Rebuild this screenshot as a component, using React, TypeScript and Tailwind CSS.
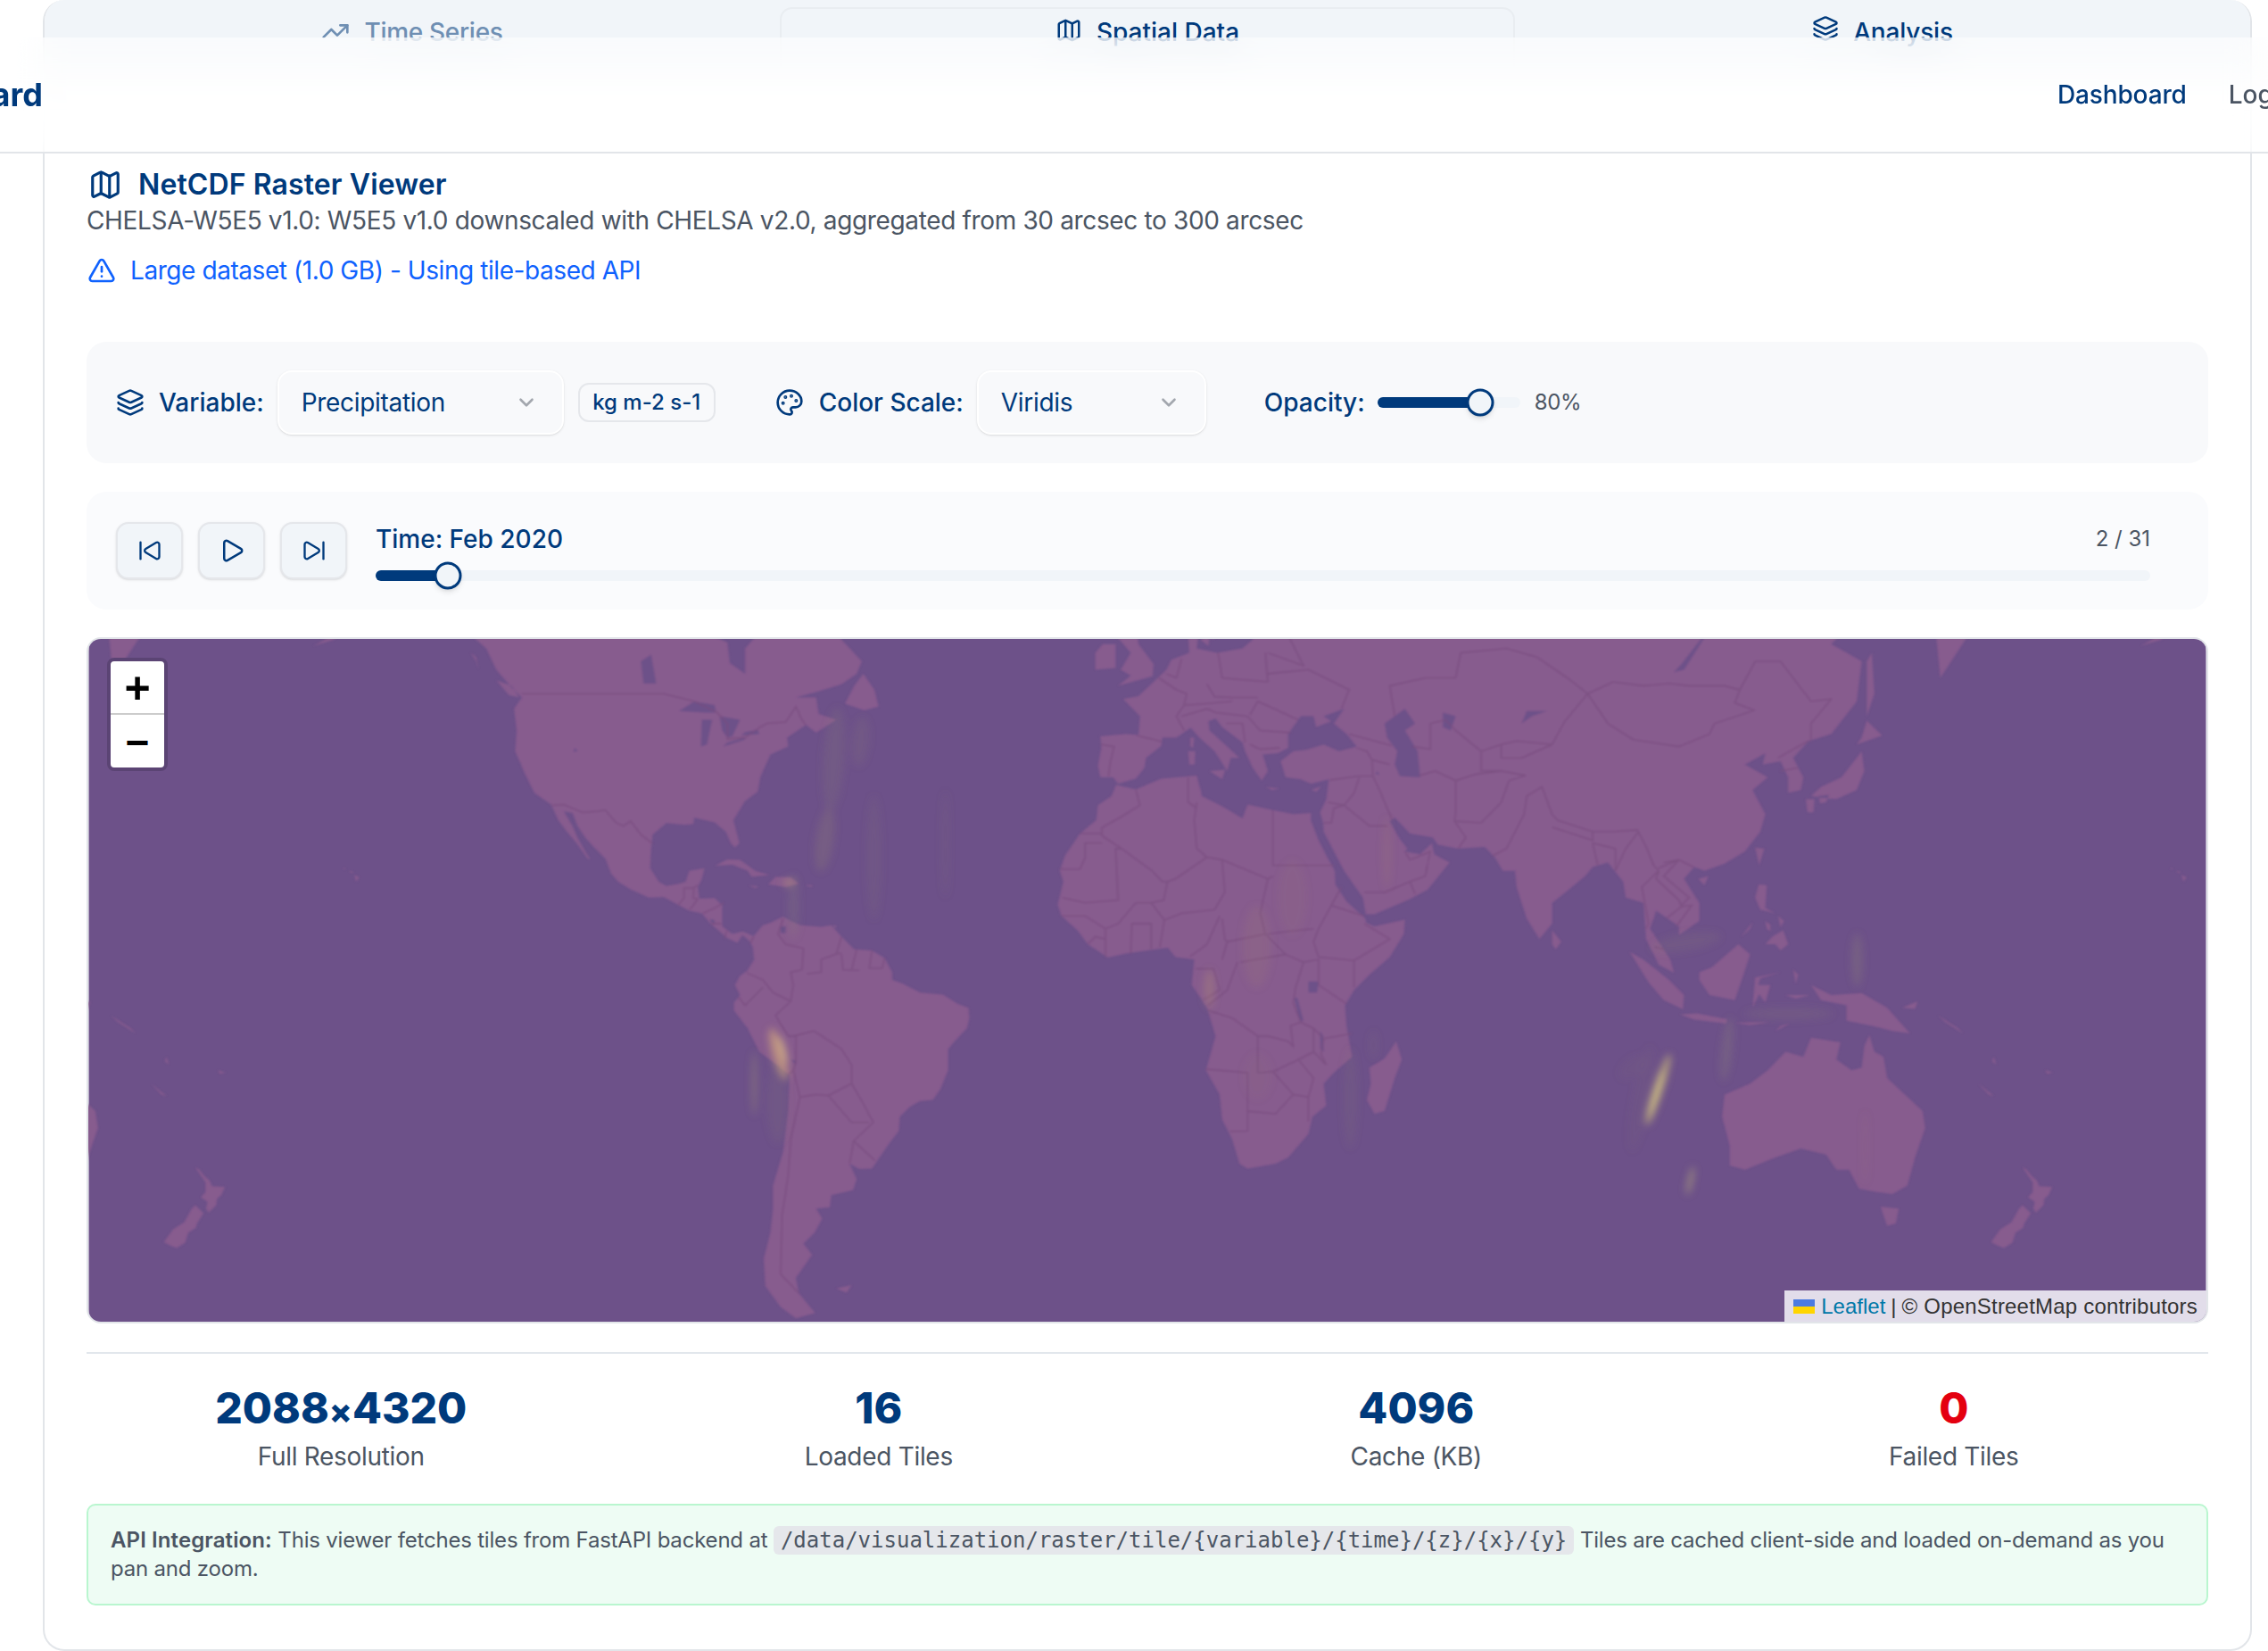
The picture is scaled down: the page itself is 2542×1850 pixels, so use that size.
import React from "react";
import {
  ChevronDown,
  Layers,
  Map as MapIcon,
  Palette,
  Play,
  SkipBack,
  SkipForward,
  TrendingUp,
  TriangleAlert,
} from "lucide-react";

// MAP DATA (lon,lat), web mercator at leaflet zoom 2 on a 2x screen
const LAND = [
  // north america
  "-168,66 -162,60 -158,58 -157,57 -164,54.8 -160,55.5 -156,57.5 -153,59 -151,61 -149,60 -146,60.8 -140,60 -136,58.3 -133,56 -130,54.5 -128,52 -125,49.8 -123,48.5 -124.5,47 -124,44 -124.3,41 -122.5,37.8 -120.5,34.5 -117.2,32.6 -115.8,30 -114.1,28 -112.2,26 -110,23.2 -109.5,23.1 -110.5,24.5 -112,27 -113,29 -114.7,31.5 -113,31.2 -112,29 -110.5,27 -109,25.5 -106.5,23.2 -105.4,20.5 -104,19 -101.5,17.5 -98,16 -95,16.1 -92,14.5 -90,13.5 -87.5,13 -85.8,11 -84,9.5 -82.5,8.2 -80.5,7.3 -79.5,8.8 -77.9,7.4 -77.3,8.6 -79.5,9.5 -81.5,9 -83.5,10.5 -83.5,14.5 -85,15.9 -88,15.8 -88.3,18 -87.5,19.5 -87,21.5 -90,21 -90.7,19 -92,18.6 -94.5,18.2 -96,19 -97.7,21.5 -97.5,25 -97.2,27.5 -94.5,29.5 -91,29.2 -89.2,29.3 -89,30.4 -85,29.6 -82.8,28 -81.8,26 -81,25.2 -80.1,26 -81.3,30 -79,33.2 -76.5,34.7 -76,37 -74,40.5 -70.5,41.7 -70.7,43 -67,44.8 -65,43.7 -61,45.5 -64.5,46.3 -65,48.5 -69,48.5 -65,49.2 -60,50.2 -57,51.5 -56,53 -60,55.5 -62,58 -64.5,60.3 -69,58.8 -72,61 -78,62.5 -77,60 -78.5,58 -76.7,56 -79,54.5 -79,51.5 -82,52.8 -82.5,55.2 -88,56.5 -92.5,57 -94.5,59 -94,61 -95,66 -100,70 -130,72",
  "-59.3,47.7 -55.5,46.8 -52.7,47.3 -53.5,49.5 -55.7,51.5 -57.5,50",
  "-84.9,21.9 -82.5,23.1 -80,23 -77,21 -74.2,20.2 -77.7,19.9 -78.5,21 -81.5,22.1",
  "-74.4,18.5 -73,19.9 -70,19.8 -68.4,18.6 -71,18",
  "-78.3,18.3 -76.3,18.1 -77,17.8",
  "-67.2,18.4 -65.7,18.3 -66,18",
  "-128,50.7 -125,50 -123.5,48.5 -125.5,48.8",
  "-133,54 -132,53 -131.5,52 -132,53.5",
  "-156,20.2 -155,19.8 -155.6,19",
  "-158.2,21.6 -157.7,21.4 -158,21.2",
  "-157,21 -156,20.7 -156.6,20.6",
  // south america
  "-77.3,8.6 -75.5,10.7 -74,11.2 -71.5,12.4 -70,11.5 -68,10.7 -64,10.4 -62,10.7 -60,8.5 -57.5,6 -54,5.8 -51.5,4.3 -50,1.5 -50,0 -48,-0.7 -44.5,-2.5 -40,-2.9 -37,-4.8 -35,-5.5 -34.8,-7.5 -35.3,-9.5 -37.5,-11.8 -39,-13.5 -39,-17.5 -40.5,-21 -42,-23 -44.5,-23.2 -46.5,-24.2 -48.5,-26 -48.7,-28.5 -50.5,-30.5 -52.5,-33 -54,-34.8 -56.5,-34.9 -58.4,-34 -57,-36.5 -57.7,-38.2 -62,-39 -62.3,-40.8 -65,-41 -63.8,-42.5 -65.3,-44.5 -67.5,-46 -65.8,-47.5 -69,-50.5 -68.4,-52.4 -65.2,-54.7 -69,-55.3 -72,-54 -75,-51.5 -75.3,-48 -74,-44.5 -73.5,-41 -73.5,-37.5 -71.5,-32 -70.5,-25 -70.2,-18.5 -72,-17 -76.2,-14 -78.5,-9.5 -81.2,-6 -81.2,-4.5 -80,-3 -81,-1 -80,0.8 -78.6,1.8 -77.2,4 -77.5,6.5 -77.9,7.2",
  "-61,-51.8 -58,-51.4 -59,-52.3",
  "-61.7,10.7 -61,10.6 -61.2,10.1",
  // africa
  "-5.9,35.8 -2,35.1 3,36.8 10,37.3 11,34 15,32.3 19,30.3 20,32.6 25,31.7 29,31 32.5,31.2 32.5,29.9 34,26.5 35.7,23.5 37.2,21 37.3,18.5 39.5,15.3 43.2,12 43.4,11.2 45,10.5 51,11.8 50.8,9 48,4.5 44,1 41,-2 39.2,-5 39.5,-9 40.6,-15 37,-18 35,-20 35.5,-24 32.8,-26 32,-29 28,-33 25.5,-34 20,-34.8 18.4,-34 17,-30 15,-26.5 14.5,-22 11.8,-17.5 13.7,-11 12,-5.5 9,-1 9.5,4 5.8,4.5 4.3,6.3 1,5.9 -4,5.2 -7.5,4.4 -11.5,7 -13.5,9.7 -16.7,12.5 -17.4,14.7 -16.3,19 -17,21 -16,23.7 -13,27.7 -9.8,30 -9.5,32.5 -6.8,34",
  "49.3,-12 50.4,-15.5 49,-19 47,-25 45,-25.5 43.5,-23 44.3,-20 44,-17 47,-15.3",
  // eurasia
  "-9.5,38.8 -8.8,41.5 -9,43.2 -4,43.5 -1.5,43.4 -1.2,46 -4.5,48.3 -1.5,48.7 1.5,50.5 4,52 5,53.2 8.5,54 8.2,57 10.6,57.7 10,54.5 14,54 19,54.5 21,55.5 21,57 24,58 23.5,59.3 30,60 23,60 21,62 25,65.5 22,65.5 17.5,62 19,60 16.5,57 14.5,56 13,55.5 11,59 6,58 5,62 15,69 30,71 40,67 60,70 100,76 140,73 180,69 180,65 177,62.5 170,60 163,59.5 162,56 156.5,51 155.5,57 160,61 155,59 143,59.5 135,55 141,53 140,48 135,43.5 130.5,42.5 127.5,40 129.5,37 129,35 126.5,34.5 126.5,37 125,39.5 121.5,39 122,40.7 118,39 122.5,37 119.5,35 122,31 121,28 118,24.5 114,22.3 110,21 108,21.7 106,19.5 109,15 109,11.5 105,8.8 105,10.5 100.5,13.5 99.3,10 103.3,4 104,1.4 101,3 98.5,8 98,15 94.5,16 94,19 91,22.5 88,21.7 86.5,20 82,16.5 80,15 80,11 77.5,8 75,12 73,18 72.7,21 70.3,21 68.7,23.5 66.7,25.3 61.5,25 57.5,25.7 56.5,27 52,27.7 49,30.4 48,29.8 50,26.7 51.5,25 51,24.5 54,24 56.3,26 56.8,24 59.8,22.5 55.5,17.5 52,15.7 45,12.8 43.3,12.8 42.7,16 39,21 35,28 34.9,29.5 34.3,31.3 35.5,33.5 36,36.7 32.5,36 30.5,36.7 27.5,37 26.5,39.5 29,41 31.5,41.2 35,42 38,41 41.5,41.7 39.5,43.5 37,45 39,47 35,46 36.5,45.3 33.5,44.5 33,46 30.5,46 28,43.5 28,41.5 26,40.7 23,40.5 24,38 22.8,36.5 21,38.5 19.5,41 19,42.3 15,44.5 13.7,45.7 12.3,45.3 12.5,44 16,41.7 18.4,40 16.7,40 16,38 13.5,41 10.5,43 8.8,44.4 6,43 3.2,43 3,41.8 0,40 -0.3,38.5 -2,36.8 -5.5,36 -6.5,37 -9,37",
  "-5.5,50 1.3,51.2 1.5,52.7 -1.5,55 -2,57.6 -5,58.5 -6,56 -3,54 -5,52 -3,51.3",
  "-10,52 -6,52.2 -6,55 -8.5,55 -10,54",
  "12.5,38 15.6,38.2 15,36.7",
  "8.3,41 9.7,41 9.6,39 8.5,39",
  "8.7,43 9.5,43 9.3,41.5 8.7,41.7",
  "23.6,35.5 26.3,35.2 24.8,35",
  "32.5,35 34.5,35.6 33.6,34.7",
  "10.7,55.5 12.5,56 12.3,54.8",
  "18.2,57.9 19,57.9 18.5,57",
  "80,9.7 81.8,7.5 80.7,6 80,7",
  "131,34 136,33.5 140,35 141.5,38 141,41 140,40 137,37 133,35.5",
  "130,33.5 131.7,33.5 131.5,31.3 130.3,31.3",
  "132.5,34 134.5,34.2 134,33 132.8,32.8",
  "140,42 145,43.3 142,45.4 141,43",
  "142,46 143.5,49 143,54 142,53",
  "120,25.2 121.8,25 120.8,22",
  "108.8,19.5 110.8,20 110,18.3",
  "120,16 120.7,18.5 122.3,18.3 122,14 124,13 121,13.7",
  "122,7 123.5,8.6 125.5,9.7 126.5,7 125,5.8 124,7",
  "122,11.5 123,10.8 123,9.5 122.3,10",
  "124.5,12.5 125.7,11.5 125,10.3",
  "117.2,8.4 119.5,11.3 119,10",
  // indonesia etc
  "95.3,5.5 98,4 103,0 106,-3 105.8,-5.8 102,-4 99,-0.5",
  "105.2,-6.8 108.5,-6.6 114.5,-7.7 114.3,-8.6 108,-7.8",
  "109,1.5 111.5,2.5 116.7,7 119,5 117.7,1 116,-4 111,-3 109,0",
  "119.5,-5.5 120,0.5 125,1.5 121,0.3 120.6,-1 123,-1 122,-4.5 120.8,-2.8",
  "131,-1 135,-3 141,-2.6 146,-5.5 150.5,-10.5 147,-10 143,-9 138,-8 138,-5 133,-4",
  "116,-8.4 119,-8.3 123,-8.3 119,-8.9",
  "124,-10 127,-8.5 125,-9",
  "127.5,2 128.5,1 128,-0.8",
  "126,-3 130.8,-3 128,-3.7",
  "149,-5.5 152,-4.2 151.5,-5.7",
  "156,-7 160,-9.5 161,-10.5 157.5,-8.3",
  "164,-20 167,-22.3 166,-22",
  "177.2,-17.5 178.6,-18 177.5,-18.2",
  "167,-15 167.5,-16.5 166.7,-15.8",
  // australia, nz
  "114,-22 113.5,-26 115,-31 115,-34.3 118,-35 124,-33 129,-31.5 134,-32.5 136,-35 138.5,-35 140.5,-38 144,-38.5 147,-38.8 150,-37.5 151.5,-33 153.5,-28 153,-25 149.5,-22 146,-19 145.3,-15 143.5,-14 142.5,-10.8 141.5,-13 141,-17 139,-17.5 136,-15.5 136.8,-12.2 131,-11.3 129.5,-15 126,-14 122.5,-17.5 119,-20",
  "144.7,-40.7 148.3,-41 147.7,-43.2 146,-43.5",
  "172.7,-34.5 173.5,-35 174.5,-36 175.5,-36.7 176,-37.6 178.5,-37.7 177.8,-39 177,-39.5 176.8,-40.5 175.3,-41.6 174.8,-41 175.1,-40 173.8,-39.3 174.7,-38.5 174.7,-37 173,-35",
  "172.7,-40.5 174.3,-41.7 173,-43.2 172.8,-43.8 171.3,-44.5 170.7,-45.9 169,-46.6 167.5,-46.2 166.5,-45.8 168.3,-44 170.5,-43 172,-41",
];

const WATER = [
  "47,45 51,47 53,45 51,44 53.5,41 54,37 50,37.2 49,39 49.5,41 47.5,43",
  "58.5,46.5 61,46 60,44 58.5,44.5",
  "74,45 75,46.7 79,46.7 76,46",
  "104,51.7 106,52 110,55.7 109.5,55.7 105.5,52.7",
  "32,-0.3 34,-0.3 33.7,-2.5 32,-2.5",
  "29.2,-3.5 29.8,-3.5 31,-8 30.3,-8",
  "34.3,-10 34.9,-11 35,-14 34.4,-13.5",
  "-92,46.7 -89,48 -85,47.5 -84.7,46.5 -87,46.5",
  "-87.7,41.7 -86.5,42 -85.5,45.5 -87.5,45.5",
  "-84,46 -80,45.5 -81.5,43.2 -82.5,43 -83.5,44",
  "-83.3,41.7 -79,42.7 -79,43 -82.5,42.3",
  "-79.7,43.3 -76.2,43.5 -76.5,44.1 -79,43.8",
  "-99,50.3 -96.5,50.3 -97.5,53.8 -99.5,53",
  "-112.5,41.5 -112,41 -112.8,40.9",
  "-70,-15.5 -69,-15.7 -69,-16.5",
  "-72,10.5 -71,10.5 -71,9.2 -72,9.2",
  "45.5,38 46,37.4 45.3,37.5",
  "-85.9,11.9 -85,11.7 -85,11 -85.7,11.3",
];

const BORDERS = [
  "-123,49 -95,49 -89,48 -84.5,46.5 -82.5,45 -82.5,42.8 -79,43 -76,44.5 -74.7,45 -71,45.2 -69,47.3 -67.8,45.5 -67,44.8",
  "-141,60 -141,70",
  "-117,32.5 -114.7,32.6 -111,31.3 -108,31.5 -106.5,31.7 -104.5,29.6 -103,29 -101.5,29.8 -99.5,27.5 -97.2,25.9",
  "-92.2,14.5 -91,16 -91,17.8 -89.1,17.8 -88.3,18.4",
  "-89.1,17.8 -89.2,15.9 -88.3,15.7",
  "-89.9,13.7 -89.3,14.4 -88.3,15.7",
  "-87.3,13 -85,14 -83.2,15",
  "-85.7,11 -83.7,11",
  "-83,8.2 -82.6,9.6",
  "-77.9,7.2 -77.3,8.6",
  "-71.5,12 -72.5,9 -71,7 -67.5,6.2 -67.8,2 -70,1.5 -69.5,-1 -70,-4.2",
  "-60,8.5 -61,5.2 -60,5.2",
  "-60.7,5.2 -64,4 -64,1.5 -66.8,1.2",
  "-60,5 -59.7,2 -56.5,1.9",
  "-57,6 -58,2",
  "-54,5.8 -54.5,2.3 -52,2.3 -51.5,4.3",
  "-78.7,1.4 -75.5,0 -73.5,-2.5 -70,-4.2",
  "-80.3,-3.4 -79,-5 -75.5,-1.5",
  "-70,-4.2 -73,-7 -70.5,-11 -69,-11 -69,-16 -69.5,-17.5",
  "-69.5,-11 -65.4,-10 -60,-13.5 -58,-16.5 -58,-20 -62.6,-22.2",
  "-69.5,-17.5 -68.2,-22.5 -65,-22 -62.6,-22.2",
  "-68.2,-22.5 -70,-30 -70.5,-36 -71.7,-42 -72,-50 -68.4,-52.4",
  "-69.5,-17.5 -70.4,-18.3",
  "-62.6,-22.2 -58,-27 -54.6,-27",
  "-58,-20 -55.5,-24 -54.6,-25.6 -53.7,-27 -57.6,-30.2 -53.4,-33.5",
  "-57.6,-30.2 -58.4,-34",
  "-2,35 -1.2,32.5 -5,30.5 -8.7,28.7 -8.7,27.3",
  "-13,27.7 -8.7,27.7",
  "-8.7,26 -12,26 -12,23.4 -13,21.3 -17,21.3",
  "-8.7,27.3 -4.8,25 1.2,21 3.2,19 4.2,19 5.8,19.5 12,23.5 10,25 9.5,30 10,33",
  "8.3,37 8.3,33 10,32",
  "25,31.7 25,22 37,22",
  "25,20 24,19.5 15,23 12,23.5",
  "24,19.5 22.5,13 23.5,9",
  "15,23 15.5,17 13.5,13.7",
  "-4.8,25 -6,25 -5.5,15.5 -12,15 -16.5,16",
  "4.2,19 3.5,15.5 1,15 -2,15 -5.5,11 -8,10 -12,12.5 -16.7,12.5",
  "-8,10 -8,4.5",
  "-11.5,7 -10,8.5 -8,8",
  "-3,5.2 -2.8,11 1,11 1,6",
  "3.6,11.7 1,15",
  "2.7,6.4 3.6,11.7 7,13 13.5,13.7",
  "8.7,4.6 12,7 14.5,12.5",
  "15,12 15.5,8 16,7.5 23.5,9 27.5,5 31,3.5 29.5,-1.5 29,-4.5 30.5,-8.3",
  "15,4 16,7.5",
  "18.6,3.5 27.5,5",
  "12.2,-6 17,-7.5 22,-11 24,-11 28,-12 29,-13 28.5,-9 30.5,-8.3",
  "9.8,2.2 13.3,2.2 14.5,-2 11.2,-4",
  "12.2,-5 16,-2 18,3.5",
  "36.5,14.5 34,10 33,7.5 34,4.5 41,3.8 48,8 43,11",
  "24,9 28,9.5 33,10",
  "31,3.5 34,4 34,-1 39.5,-4.7",
  "41,-1.5 41,3.8",
  "36.5,14.5 38.5,18",
  "36.5,14.5 43,12.5",
  "30.5,-8.3 33,-9.5 35,-11.5 40.5,-10.5",
  "33,-9.5 33,-14 30,-15.5 33,-19 32,-22.5 29,-22 25.5,-25.5 20,-25 20,-28.5 16.5,-28.6",
  "35,-11.5 34.5,-14.5 35.5,-16.5 33,-14",
  "32,-22.5 32,-26.8",
  "11.8,-17.3 20,-18 20,-25",
  "22,-18 25,-17.8 30,-15.5",
  "22,-11 22,-13 22,-18",
  "25,-17.8 29,-22",
  "49,46 48,50 55,51 61,51 62,54 71,54.5 77,53.5 83,51 87,49",
  "87,49 92,50.5 98,50 103,50.3 107,50 114,50 117,49.5 120,53 125,53 131,48 135,48.3 131,45 131,42.5",
  "87,49 91,45 96,42.7 105,41.7 111,43.5 112,45 119.8,46.8 116,47.8 117,49.5",
  "87,49 82.5,45.3 80,42 74,40",
  "52.5,41.7 56,41.3 56,45 59,45.5 61,44 66,41 70,42 73,42.5 80,42",
  "53.8,37.3 57,38 61,36.5 65,37.5 70,38 74.8,37.3",
  "61,36.5 61,31.5 60.8,29.8 66,29.5 70,33 71.5,36.5 74.8,37.3",
  "60.8,29.8 63,27 61.5,25",
  "66,41 66,38 70,38",
  "70,42 70,40 74,40",
  "68.2,23.7 71,25 74.5,31 75,34 78,35.5 80,31 81,30 88,28 92,28 97,28.3",
  "80,28.8 88,26.5 88,28",
  "88,26 89,22",
  "88,26 92.5,25 92.5,21",
  "92.5,21 94.5,25 97,28 98.7,25 100,22 101,21",
  "101,21.5 105,23 102,20 107,16 105.5,14.5",
  "101,21 100.5,19.5 105,15.5 105.5,14.3",
  "102.5,12 105.5,14.3 107.5,14.5 104.5,10.5",
  "101,21 97.7,18 99,11 98.5,10",
  "102,22.5 105,23 108,21.6",
  "124.5,40 128,41.5 130.5,42.5",
  "125,38 128.5,38.5",
  "100.2,6.5 102,6",
  "48.5,30 46,35 44.7,37.2 44.5,39.7 43.5,41 41.5,41.5",
  "36.2,36.6 42,37.2 44.7,37.2",
  "42,37 41,34.5 39,32.5 37,32 36.5,29.5 35,29.5",
  "35.8,33 39,32.5 44,29 47.5,29",
  "43,17 47,17 52,19 55,20 55.5,22.5 56,24.5 52,23 51,24.5",
  "52,19 53,16.7",
  "40,43.5 48.5,41.8",
  "44.5,39.7 48,39",
  "-1.8,43.3 3.2,42.4",
  "-8.8,42 -6.3,41.7 -7,39.5 -7.4,37.2",
  "2.5,51 6,49.5 8,49 7.5,47.5 6,46 7.5,44",
  "4,51.5 6,51 7,53.3",
  "14.2,54 15,51 24,50.5",
  "12,50.2 13.5,48.6 17,48.5 22,48.5",
  "7,46 12,47 13.7,46.5",
  "7.5,47.5 12,47.7 17,48",
  "23.5,54 24,50.5",
  "24,51.5 32,52 40,49.5 38.5,47",
  "22,48 30,45.5",
  "20.5,46.2 22,48",
  "20,46 22.5,44 28.5,43.7",
  "13.7,46.5 20,46",
  "15.8,45 19,45 19.5,42.3",
  "20.5,42 22.5,41.3 26.3,41.5",
  "28,56 31,52.5 24,54",
  "21,56.3 28,56",
];

const BLOBS: [number, number, number, number, number, string, number][] = [
  // x, y, rx, ry, rotation, colour, opacity (map-local px)
  [773, 465, 7, 30, -16, "#e0b57a", 0.55],
  [778, 460, 3, 16, -16, "#f0d58a", 0.5],
  [746, 498, 3, 36, 0, "#a79a70", 0.35],
  [772, 520, 12, 46, 0, "#8f8070", 0.12],
  [785, 273, 7, 4, 0, "#c8a877", 0.4],
  [790, 300, 6, 36, 0, "#8f8a78", 0.2],
  [835, 135, 12, 58, 4, "#90886f", 0.16],
  [865, 115, 10, 28, 6, "#90886f", 0.12],
  [825, 225, 10, 36, 8, "#9c9170", 0.2],
  [880, 245, 8, 70, 0, "#8c8672", 0.12],
  [960, 230, 4, 60, 0, "#8c8672", 0.12],
  [1759, 505, 5, 42, 18, "#d0c078", 0.7],
  [1756, 510, 2, 28, 18, "#f0e48a", 0.7],
  [1795, 607, 3, 16, 12, "#bfb878", 0.5],
  [1836, 460, 6, 36, 6, "#989474", 0.2],
  [1982, 360, 6, 30, 0, "#9c9474", 0.22],
  [1790, 340, 40, 10, -10, "#90886f", 0.12],
  [1905, 420, 50, 7, 0, "#8e8a70", 0.14],
  [1740, 515, 10, 60, 10, "#8a8470", 0.08],
  [1256, 392, 6, 22, 0, "#bb9572", 0.3],
  [1309, 345, 16, 46, 0, "#a08070", 0.16],
  [1349, 290, 16, 42, 0, "#a08070", 0.1],
  [1455, 240, 4, 40, 0, "#a8866f", 0.2],
  [1414, 515, 8, 56, 0, "#8a8470", 0.12],
  [1440, 455, 4, 16, 0, "#8a8470", 0.12],
  [1991, 570, 2, 42, 0, "#a88a70", 0.14],
  [1310, 490, 16, 26, 0, "#9a7c70", 0.08],
  [1730, 480, 18, 10, -40, "#8a8470", 0.08],
];

// METHODS
const project = (pt: string) => {
  const [lon, lat] = pt.split(",").map(Number);
  const x = 1185 + lon * 5.689;
  const y = 382 - 326 * Math.log(Math.tan(Math.PI / 4 + (lat * Math.PI) / 360));
  return `${x.toFixed(1)} ${y.toFixed(1)}`;
};
const toPath = (line: string, close: boolean) =>
  "M" + line.trim().split(/\s+/).map(project).join("L") + (close ? "Z" : "");

const landPath = LAND.map((l) => toPath(l, true)).join("");
const waterPath = WATER.map((l) => toPath(l, true)).join("");
const borderPath = BORDERS.map((l) => toPath(l, false)).join("");

const WorldMap = () => (
  <svg viewBox="0 0 2373 765" className="block h-full w-full">
    <defs>
      <filter id="soft" x="-10%" y="-10%" width="120%" height="120%">
        <feGaussianBlur stdDeviation="0.8" />
      </filter>
      <filter id="glow" x="-100%" y="-100%" width="300%" height="300%">
        <feGaussianBlur stdDeviation="4" />
      </filter>
      <g id="world">
        <path d={landPath} fill="#875b8e" />
        <path d={waterPath} fill="#6d5189" />
        <path d={borderPath} fill="none" stroke="#7a4f80" strokeWidth="1.3" />
      </g>
    </defs>
    <rect width="2373" height="765" fill="#6d5189" />
    <g filter="url(#soft)">
      <use href="#world" x="-2048" />
      <use href="#world" />
      <use href="#world" x="2048" />
    </g>
    <g filter="url(#glow)">
      {BLOBS.map(([x, y, rx, ry, r, c, o], i) => (
        <ellipse
          key={i}
          cx={x}
          cy={y}
          rx={rx}
          ry={ry}
          fill={c}
          opacity={o}
          transform={`rotate(${r} ${x} ${y})`}
        />
      ))}
    </g>
  </svg>
);

const Thumb = ({ className }: { className: string }) => (
  <div
    className={`absolute top-1/2 h-[31px] w-[31px] -translate-x-1/2 -translate-y-1/2 rounded-full border-[3px] border-[#003a7c] bg-[#f1f5f9] shadow-md ${className}`}
  />
);

const Select = ({ label, width }: { label: string; width: string }) => (
  <div
    className={`flex h-[72px] items-center justify-between rounded-[16px] border-2 border-white bg-[#f8f9fb] pl-[25px] pr-[27px] text-[28px] tracking-[-0.3px] text-[#003a7c] shadow-sm ${width}`}
  >
    {label}
    <ChevronDown className="h-[26px] w-[26px] text-[#a3a7ae]" strokeWidth={2.4} />
  </div>
);

const TimeButton = ({ children }: { children: React.ReactNode }) => (
  <div className="flex h-[64px] w-[75px] items-center justify-center rounded-[14px] border-2 border-[#e5e7eb] bg-[#f1f5f9] text-[#003a7c] shadow-sm">
    {children}
  </div>
);

const Stat = ({ value, label, red }: { value: React.ReactNode; label: string; red?: boolean }) => (
  <div className="flex flex-col items-center">
    <div
      className={`h-[56px] text-[48px] font-extrabold leading-[56px] ${red ? "text-[#e4000f]" : "text-[#003a7c]"}`}
    >
      {value}
    </div>
    <div className="mt-[6px] text-[28px] leading-[40px] tracking-[-0.3px] text-[#4b5563]">{label}</div>
  </div>
);

export default function App() {
  return (
    <div className="relative h-[1850px] w-[2542px] overflow-hidden bg-white font-['Inter',sans-serif]">
      <div className="ml-[48px] h-[1850px] w-[2476px] overflow-hidden rounded-[24px] border-2 border-t-0 border-[#e2e5e9] bg-white">
        {/* TABS */}
        <div className="grid h-[82px] grid-cols-3 bg-[#f1f5f9] text-[28px] font-medium">
          <div className="flex items-start justify-center gap-[16px] pt-[15px] tracking-[-0.3px] text-[#6f8fb3]">
            <TrendingUp className="mt-[4px] h-[32px] w-[32px]" />
            Time Series
          </div>
          <div className="mt-[8px] flex items-start justify-center gap-[16px] rounded-t-[14px] border-x-2 border-t-2 border-[#e9edf1] pt-[5px] text-[#003a7c]">
            <MapIcon className="mt-[4px] h-[30px] w-[30px]" />
            Spatial Data
          </div>
          <div className="flex items-start justify-center gap-[16px] pt-[15px] tracking-[-0.2px] text-[#003a7c]">
            <Layers className="mt-[2px] h-[30px] w-[30px]" />
            Analysis
          </div>
        </div>

        <div className="px-[47px]">
          {/* HEADER */}
          <div className="mt-[105px] flex h-[40px] items-center gap-[18px] pl-[2px] text-[32px] font-semibold tracking-[0.1px] text-[#003a7c]">
            <MapIcon className="h-[38px] w-[38px]" />
            NetCDF Raster Viewer
          </div>
          <div className="text-[28px] leading-[40px] tracking-[-0.35px] text-[#4b5563]">
            CHELSA-W5E5 v1.0: W5E5 v1.0 downscaled with CHELSA v2.0, aggregated from 30 arcsec to 300 arcsec
          </div>
          <div className="mt-[16px] flex h-[40px] items-center gap-[16px] pl-[1px] text-[28px] tracking-[-0.43px] text-[#0f62fe]">
            <TriangleAlert className="h-[32px] w-[32px]" />
            Large dataset (1.0 GB) - Using tile-based API
          </div>

          {/* CONTROLS */}
          <div className="mt-[60px] flex h-[136px] items-center rounded-[22px] bg-[#f8f9fb] pl-[33px] text-[28px] font-medium text-[#003a7c]">
            <Layers className="h-[32px] w-[32px]" />
            <span className="ml-[16px]">Variable:</span>
            <Select label="Precipitation" width="ml-[15px] w-[321px] font-normal" />
            <div className="ml-[16px] flex h-[44px] w-[154px] items-center justify-center rounded-[12px] border-2 border-[#e5e7eb] text-[24px]">
              kg m-2 s-1
            </div>
            <Palette className="ml-[67px] h-[32px] w-[32px]" />
            <span className="ml-[17px]">Color Scale:</span>
            <Select label="Viridis" width="ml-[15px] w-[257px] font-normal" />
            <span className="ml-[65px]">Opacity:</span>
            <div className="relative ml-[14px] h-[12px] w-[160px] rounded-full bg-[#f1f5f9]">
              <div className="h-full w-[115px] rounded-full bg-[#003a7c]" />
              <Thumb className="left-[115px]" />
            </div>
            <span className="ml-[16px] text-[24px] font-normal tracking-[-0.3px] text-[#4b5563]">80%</span>
          </div>

          {/* TIME */}
          <div className="mt-[32px] flex h-[132px] items-center gap-[17px] rounded-[22px] bg-[#fafbfd] pl-[33px] pr-[65px]">
            <TimeButton>
              <SkipBack className="h-[28px] w-[28px]" />
            </TimeButton>
            <TimeButton>
              <Play className="h-[30px] w-[30px]" />
            </TimeButton>
            <TimeButton>
              <SkipForward className="h-[28px] w-[28px]" />
            </TimeButton>
            <div className="ml-[15px] flex-1">
              <div className="flex items-center justify-between">
                <span className="text-[28px] font-medium leading-[40px] text-[#003a7c]">Time: Feb 2020</span>
                <span className="text-[24px] text-[#4b5563]">2 / 31</span>
              </div>
              <div className="relative mt-[15px] h-[12px] rounded-full bg-[#f1f5f9]">
                <div className="h-full w-[81px] rounded-full bg-[#003a7c]" />
                <Thumb className="left-[81px]" />
              </div>
            </div>
          </div>

          {/* MAP */}
          <div className="relative mt-[31px] h-[769px] overflow-hidden rounded-[16px] border-2 border-[#e2e5e9]">
            <WorldMap />
            <div className="absolute left-[21px] top-[21px] w-[68px] overflow-hidden rounded-[8px] border-4 border-[#5b4474] bg-white font-['Liberation_Sans',sans-serif] text-black">
              <div className="flex h-[60px] items-center justify-center border-b-2 border-[#ccc] pt-[3px] text-[50px] font-bold">+</div>
              <div className="flex h-[59px] items-center justify-center pt-[3px] text-[46px] font-bold">−</div>
            </div>
            <div className="absolute bottom-0 right-0 flex h-[35px] items-center bg-[#e2ddea] px-[10px] font-['Liberation_Sans',sans-serif] text-[24px] text-[#333]">
              <svg viewBox="0 0 12 8" className="mr-[7px] h-[16px] w-[24px]">
                <rect width="12" height="4" fill="#4c7be1" />
                <rect y="4" width="12" height="4" fill="#ffd500" />
              </svg>
              <span className="text-[#0078a8]">Leaflet</span>
              <span className="mx-[6px]">|</span>
              <span className="tracking-[0.2px]">© OpenStreetMap contributors</span>
            </div>
          </div>

          {/* STATS */}
          <div className="mt-[32px] grid grid-cols-4 gap-[32px] border-t-2 border-[#e2e7ec] pt-[33px]">
            <Stat
              value={
                <>
                  2088<span className="text-[38px] leading-none">×</span>4320
                </>
              }
              label="Full Resolution"
            />
            <Stat value="16" label="Loaded Tiles" />
            <Stat value="4096" label="Cache (KB)" />
            <Stat value="0" label="Failed Tiles" red />
          </div>

          {/* NOTE */}
          <div className="mt-[33px] rounded-[10px] border-2 border-[#b9f6cf] bg-[#eefcf4] px-[25px] py-[23px] text-[24px] leading-[32px] tracking-[-0.2px] text-[#4b5563]">
            <strong className="font-semibold tracking-[0.1px]">API Integration:</strong> This viewer fetches tiles from FastAPI backend at{" "}
            <code className="rounded-[6px] bg-[#e5e7eb] px-[8px] py-[2px] font-['DejaVu_Sans_Mono',monospace] text-[24px] tracking-normal">
              {"/data/visualization/raster/tile/{variable}/{time}/{z}/{x}/{y}"}
            </code>{" "}
            Tiles are cached client-side and loaded on-demand as you pan and zoom.
          </div>
        </div>
      </div>

      {/* NAV */}
      <div className="absolute left-0 right-0 top-[42px] flex h-[130px] items-center justify-between border-b-2 border-[#e2e5e9] bg-white/60 text-[28px] font-medium backdrop-blur-[20px]">
        <div className="flex w-[48px] justify-end whitespace-nowrap text-[36px] font-bold text-[#003a7c]">
          Dashboard
        </div>
        <div className="absolute left-0 flex gap-[47px] whitespace-nowrap pl-[2306px]">
          <span className="tracking-[-0.15px] text-[#003a7c]">Dashboard</span>
          <span className="text-[#4b5563]">Login</span>
        </div>
      </div>
    </div>
  );
}
